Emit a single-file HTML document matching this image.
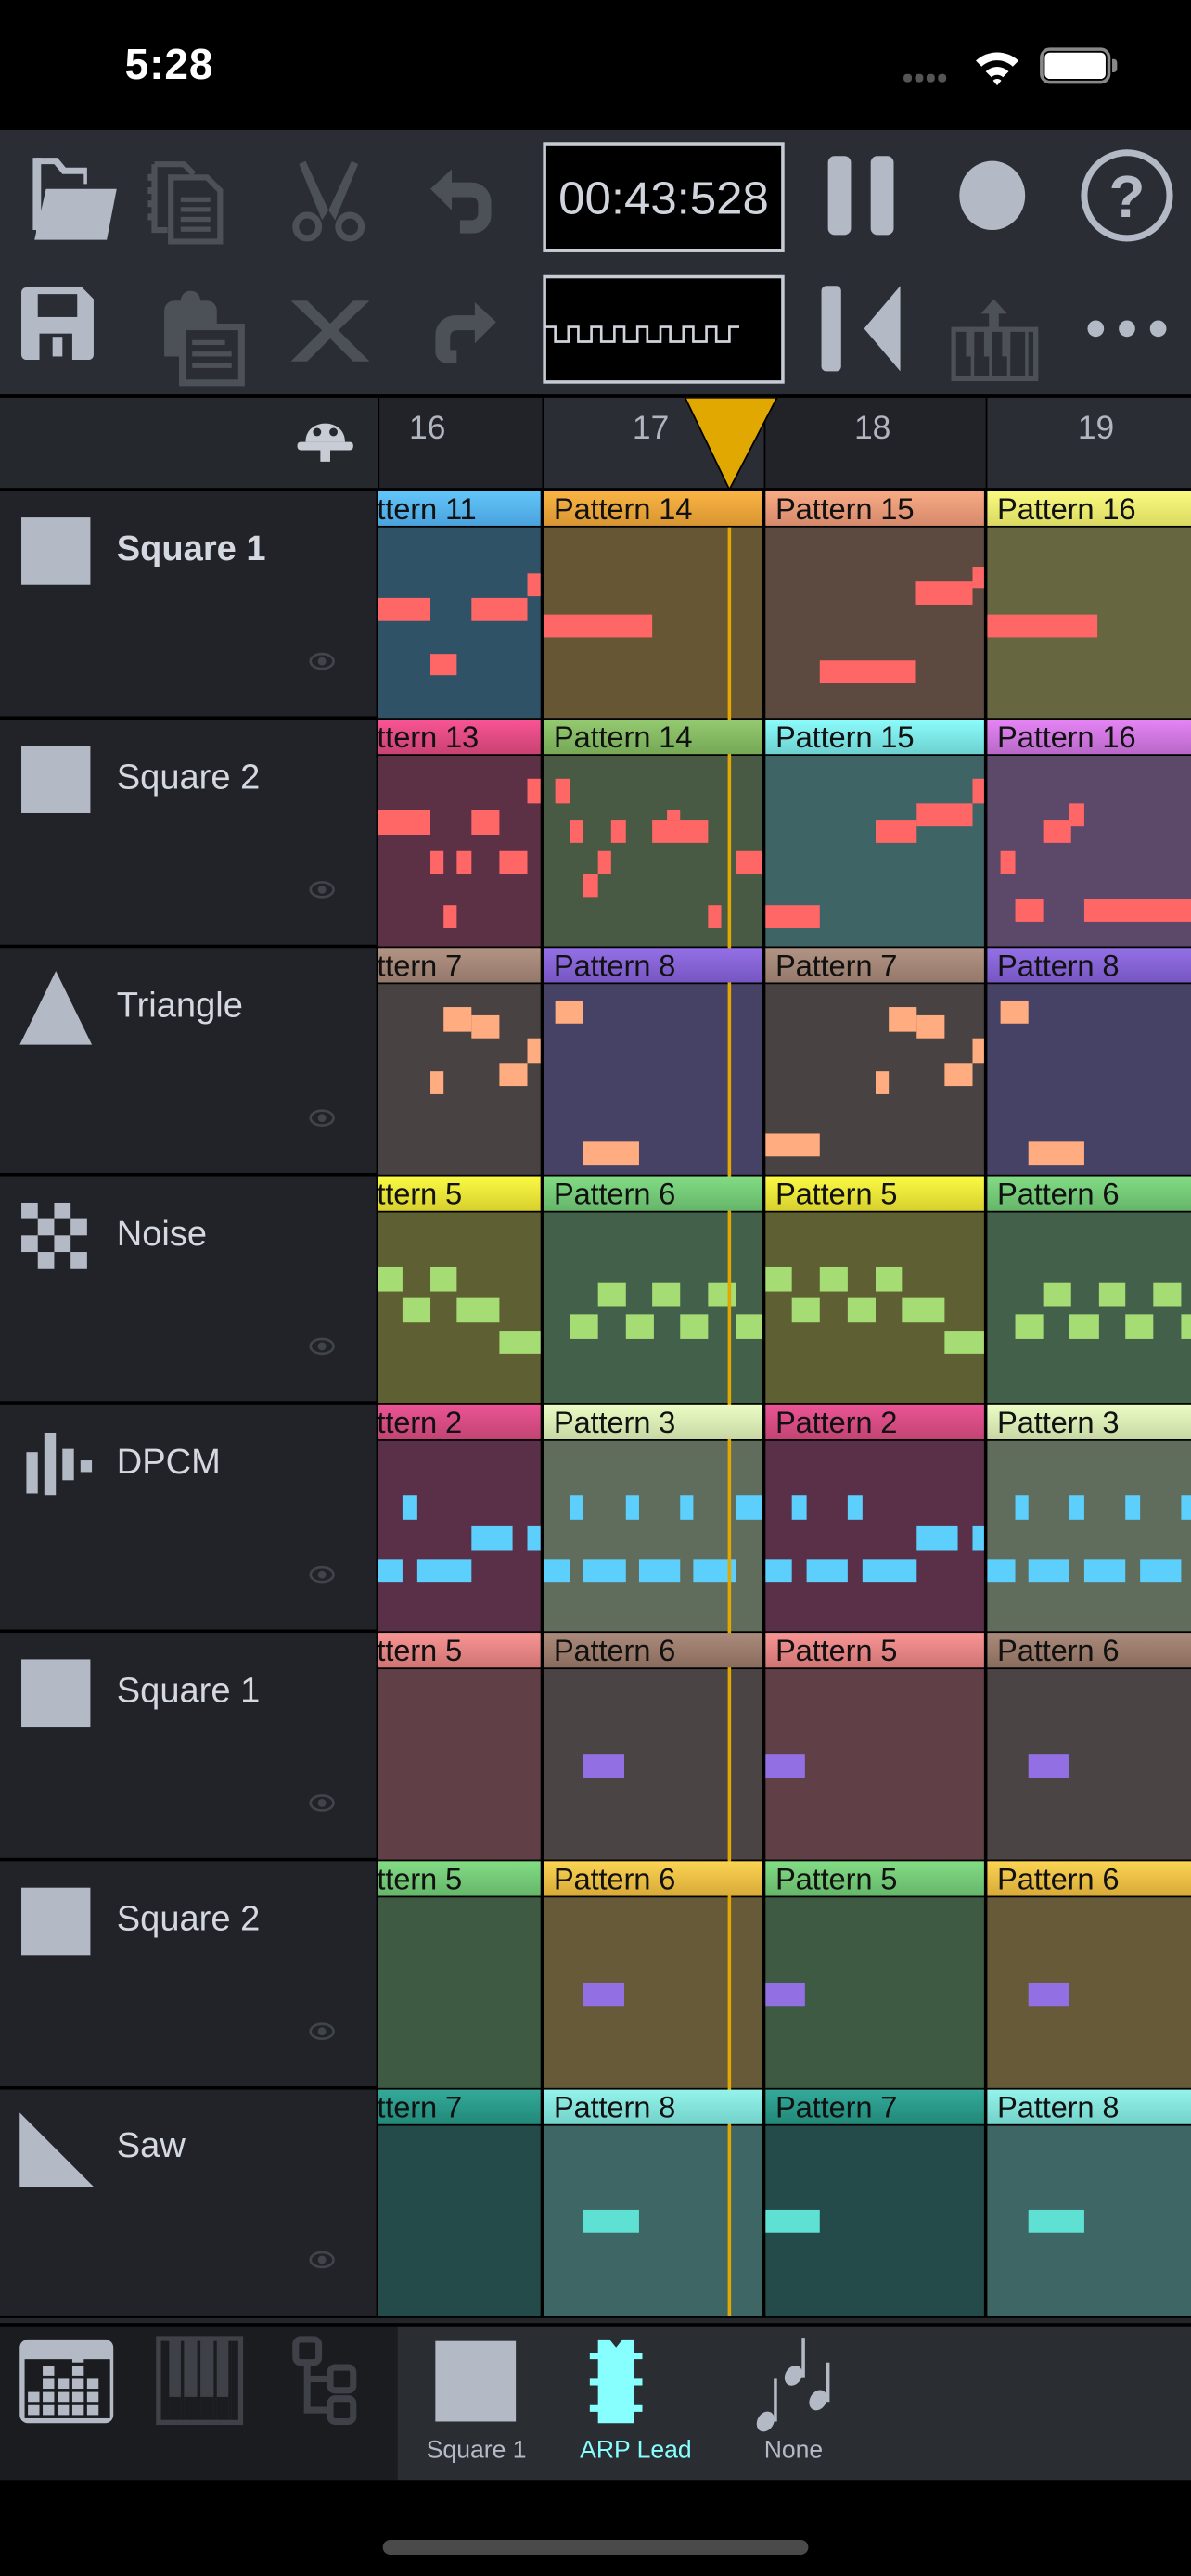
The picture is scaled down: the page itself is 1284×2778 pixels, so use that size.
<!DOCTYPE html>
<html><head><meta charset="utf-8"><style>
*{margin:0;padding:0;box-sizing:border-box}
html,body{width:1284px;height:2778px;overflow:hidden;background:#000}
#w{position:absolute;left:0;top:0;width:725px;height:1568px;transform:scale(1.7711,1.7717);transform-origin:0 0;font-family:"Liberation Sans",sans-serif;background:#000}
.a{position:absolute;display:block}
.h{position:absolute;height:21px;overflow:hidden;white-space:nowrap;font-size:18.5px;line-height:22px;color:#111;letter-spacing:-0.1px}
.b{position:absolute;height:116px}
.tn{position:absolute;left:71px;font-size:21.5px;color:#d4d8e0}
.eye{position:absolute;left:188px;width:16px;height:11px}
.r1 i,.r2 i{background:#ff6666}.r3 i{background:#ffac80}.r4 i{background:#a6dc74}.r5 i{background:#5ccffc}.r6 i,.r7 i{background:#9270e4}.r8 i{background:#5ee0d2}
i{position:absolute;display:block}
.cut{margin-left:-23px}
</style></head><body><div id="w">
<!-- status -->
<div class="a" style="left:76px;top:24px;font-size:26px;font-weight:bold;color:#fff;letter-spacing:0.5px">5:28</div>
<div class="a" style="left:550px;top:45px;width:5px;height:5px;border-radius:2px;background:#555"></div>
<div class="a" style="left:557px;top:45px;width:5px;height:5px;border-radius:2px;background:#555"></div>
<div class="a" style="left:564px;top:45px;width:5px;height:5px;border-radius:2px;background:#555"></div>
<div class="a" style="left:571px;top:45px;width:5px;height:5px;border-radius:2px;background:#555"></div>
<svg class="a" style="left:592px;top:28px" width="30" height="24" viewBox="0 0 30 24"><path d="M2 9 A19 19 0 0 1 28 9 L24.5 12.5 A14 14 0 0 0 5.5 12.5Z M8 15.5 A10 10 0 0 1 22 15.5 L18.5 19 A5 5 0 0 0 11.5 19Z M15 24 L12.5 21 A3.5 3.5 0 0 1 17.5 21Z" fill="#fff"/></svg>
<div class="a" style="left:633px;top:29px;width:43px;height:22px;border:2px solid #888;border-radius:6px"></div>
<div class="a" style="left:636px;top:32px;width:37px;height:16px;border-radius:3px;background:#fff"></div>
<div class="a" style="left:677px;top:36px;width:3px;height:8px;border-radius:0 2px 2px 0;background:#888"></div>
<!-- toolbar -->
<div class="a" style="left:0;top:79px;width:725px;height:161px;background:#2a2d33"></div>
<svg class="a" style="left:0;top:79px" width="725" height="161" viewBox="0 79 725 161">
<g fill="#b4b9c6">
<path d="M20 96h15l5 6h13v10h-2v-6h-13l-5-6h-10v40h-3z"/><path d="M21 146l7-31h43l-6 31z"/>
<path d="M22 96h3v46h-3z"/>
</g>
<g fill="none" stroke="#4c5057" stroke-width="3.5">
<path d="M94 100h18l6 6M94 100v40h8"/>
<path d="M104 108h22l8 8v31h-30z"/>
</g>
<g fill="#4c5057"><rect x="90" y="106" width="4" height="4"/><rect x="90" y="114" width="4" height="4"/><rect x="90" y="122" width="4" height="4"/><rect x="90" y="130" width="4" height="4"/>
<rect x="110" y="120" width="18" height="3"/><rect x="110" y="126" width="18" height="3"/><rect x="110" y="132" width="18" height="3"/><rect x="110" y="138" width="18" height="3"/>
<path d="M186 98l14 30-4 6-14-34z M214 98l-14 30 4 6 14-34z"/>
<path d="M262 115l13-12v8h12a12 12 0 0 1 12 12v8a11 11 0 0 1-11 11h-8v-8h7a4 4 0 0 0 4-4v-6a4 4 0 0 0-4-4h-12v8z"/>
</g>
<circle cx="187" cy="138" r="7" fill="none" stroke="#4c5057" stroke-width="4"/><circle cx="213" cy="138" r="7" fill="none" stroke="#4c5057" stroke-width="4"/>
<rect x="331.5" y="87.5" width="145" height="65" fill="#000" stroke="#c7cbd3" stroke-width="2"/>
<text x="404" y="130" text-anchor="middle" font-size="28" fill="#d0d4dc" font-family="Liberation Sans" textLength="128" lengthAdjust="spacingAndGlyphs">00:43:528</text>
<g fill="#b4b9c6">
<rect x="504" y="95" width="14" height="48" rx="4"/><rect x="530" y="95" width="14" height="48" rx="4"/>
<ellipse cx="604" cy="119" rx="20" ry="21"/>
<circle cx="686" cy="119" r="26" fill="none" stroke="#b4b9c6" stroke-width="4"/>
<text x="686" y="132" text-anchor="middle" font-size="36" font-weight="bold" fill="#b4b9c6" font-family="Liberation Sans">?</text>
<path d="M16 175h34l7 7v34a3 3 0 0 1-3 3h-38a3 3 0 0 1-3-3v-38a3 3 0 0 1 3-3z"/>
</g>
<rect x="23" y="179" width="24" height="14" fill="#2a2d33"/><rect x="24" y="203" width="20" height="16" fill="#2a2d33"/><rect x="32" y="205" width="6" height="12" fill="#b4b9c6"/>
<g fill="#4c5057">
<path d="M100 189a6 6 0 0 1 6-6h4a6 6 0 0 1 12 0h4a6 6 0 0 1 6 6v28h-32z"/>
<rect x="109" y="197" width="40" height="38"/><rect x="113" y="201" width="32" height="30" fill="#2a2d33"/><rect x="117" y="207" width="20" height="3"/><rect x="117" y="214" width="24" height="3"/><rect x="117" y="221" width="24" height="3"/>
<path d="M177 183h10l14 14 14-14h10l-19 18 19 19h-10l-14-14-14 14h-10l19-19z"/>
<path d="M302 196l-13-12v8h-12a12 12 0 0 0-12 12v10a7 7 0 0 0 7 7h6v-8h-4v-8a4 4 0 0 1 4-4h11v8z"/>
</g>
<rect x="331.5" y="168.5" width="145" height="64" fill="#000" stroke="#c7cbd3" stroke-width="2"/>
<path d="M332 199h6v9h8v-9h6v9h8v-9h6v9h8v-9h6v9h8v-9h6v9h8v-9h6v9h8v-9h6v9h8v-9h6v9h8v-9h6" fill="none" stroke="#d0d4dc" stroke-width="1.5"/>
<g fill="#b4b9c6"><rect x="500" y="174" width="12" height="52" rx="3"/><path d="M548 174v52l-22-26z"/>
<circle cx="667" cy="200" r="5"/><circle cx="686" cy="200" r="5"/><circle cx="705" cy="200" r="5"/></g>
<g fill="#4c5057"><path d="M605 182l8 9h-5v10h-6v-10h-5z"/><rect x="579" y="199" width="53" height="33"/></g>
<g fill="#2a2d33"><rect x="582" y="202" width="9" height="27"/><rect x="593" y="202" width="9" height="27"/><rect x="604" y="202" width="9" height="27"/><rect x="615" y="202" width="9" height="27"/><rect x="626" y="202" width="3" height="27"/></g>
<g fill="#4c5057"><rect x="588" y="199" width="5" height="18"/><rect x="599" y="199" width="5" height="18"/><rect x="610" y="199" width="5" height="18"/></g>
</svg>
<!-- header row -->
<div class="a" style="left:0;top:242px;width:230px;height:56px;background:#25282d"></div>
<div class="a" style="left:230px;top:242px;width:100px;height:56px;background:#212328;border-left:1px solid #000"></div>
<div class="a" style="left:330px;top:242px;width:135px;height:56px;background:#2a2d33;border-left:1px solid #000"></div>
<div class="a" style="left:465px;top:242px;width:135px;height:56px;background:#212328;border-left:1px solid #000"></div>
<div class="a" style="left:600px;top:242px;width:125px;height:56px;background:#2a2d33;border-left:1px solid #000"></div>
<div class="a" style="left:249px;top:250px;font-size:20px;color:#b0b5c0">16</div>
<div class="a" style="left:385px;top:250px;font-size:20px;color:#b0b5c0">17</div>
<div class="a" style="left:520px;top:250px;font-size:20px;color:#b0b5c0">18</div>
<div class="a" style="left:656px;top:250px;font-size:20px;color:#b0b5c0">19</div>
<svg class="a" style="left:178px;top:250px" width="40" height="34" viewBox="0 0 40 34"><path d="M8 19 C8 4 32 4 32 19z" fill="#c8ccd4"/><rect x="3" y="19" width="34" height="5" rx="2" fill="#c8ccd4"/><rect x="17" y="22" width="6" height="9" fill="#c8ccd4"/><circle cx="15" cy="13" r="2.5" fill="#25282d"/><circle cx="25" cy="13" r="2.5" fill="#25282d"/></svg>
<div class="a" style="left:0;top:240px;width:725px;height:2px;background:#000"></div>
<div class="a" style="left:0;top:297px;width:725px;height:2px;background:#000"></div>

<!-- tracks left panel -->
<div class="a" style="left:0;top:299px;width:230px;height:1111px;background:#212328"></div>
<div class="a" style="left:229px;top:299px;width:1px;height:1111px;background:#000"></div>
<div class="a" style="left:0;top:436px;width:230px;height:2px;background:#000"></div>
<div class="a" style="left:0;top:575px;width:230px;height:2px;background:#000"></div>
<div class="a" style="left:0;top:714px;width:230px;height:2px;background:#000"></div>
<div class="a" style="left:0;top:853px;width:230px;height:2px;background:#000"></div>
<div class="a" style="left:0;top:992px;width:230px;height:2px;background:#000"></div>
<div class="a" style="left:0;top:1131px;width:230px;height:2px;background:#000"></div>
<div class="a" style="left:0;top:1270px;width:230px;height:2px;background:#000"></div>

<div class="a" style="left:13px;top:315px;width:42px;height:41px;background:#b4b9c6"></div>
<div class="tn" style="top:322px;font-weight:bold">Square 1</div>
<div class="a" style="left:13px;top:454px;width:42px;height:41px;background:#b4b9c6"></div>
<div class="tn" style="top:461px">Square 2</div>
<svg class="a" style="left:11px;top:590px" width="46" height="46"><path d="M23 1L45 46H1z" fill="#b4b9c6"/></svg>
<div class="tn" style="top:600px">Triangle</div>
<svg class="a" style="left:13px;top:732px" width="42" height="42" fill="#b4b9c6"><rect x="0" y="0" width="10" height="10"/><rect x="20" y="0" width="10" height="10"/><rect x="10" y="10" width="10" height="10"/><rect x="30" y="10" width="10" height="10"/><rect x="0" y="20" width="10" height="10"/><rect x="20" y="20" width="10" height="10"/><rect x="10" y="30" width="10" height="10"/><rect x="30" y="30" width="10" height="10"/></svg>
<div class="tn" style="top:739px">Noise</div>
<svg class="a" style="left:16px;top:872px" width="40" height="42" fill="#b4b9c6"><rect x="0" y="12" width="7" height="25"/><rect x="11" y="0" width="7" height="38"/><rect x="22" y="10" width="7" height="19"/><rect x="33" y="17" width="7" height="7"/></svg>
<div class="tn" style="top:878px">DPCM</div>
<div class="a" style="left:13px;top:1010px;width:42px;height:41px;background:#b4b9c6"></div>
<div class="tn" style="top:1017px">Square 1</div>
<div class="a" style="left:13px;top:1149px;width:42px;height:41px;background:#b4b9c6"></div>
<div class="tn" style="top:1156px">Square 2</div>
<svg class="a" style="left:11px;top:1285px" width="46" height="46"><path d="M1 1L46 46H1z" fill="#b4b9c6"/></svg>
<div class="tn" style="top:1294px">Saw</div>
<svg width="0" height="0" style="position:absolute"><defs><g id="e"><ellipse cx="8" cy="5.5" rx="7" ry="4.5" fill="none" stroke="#40444b" stroke-width="1.5"/><circle cx="8" cy="5.5" r="2.5" fill="#40444b"/></g></defs></svg>
<svg class="eye" style="top:397px"><use href="#e"/></svg>
<svg class="eye" style="top:536px"><use href="#e"/></svg>
<svg class="eye" style="top:675px"><use href="#e"/></svg>
<svg class="eye" style="top:814px"><use href="#e"/></svg>
<svg class="eye" style="top:953px"><use href="#e"/></svg>
<svg class="eye" style="top:1092px"><use href="#e"/></svg>
<svg class="eye" style="top:1231px"><use href="#e"/></svg>
<svg class="eye" style="top:1370px"><use href="#e"/></svg>

<!-- grid bg -->
<div class="a" style="left:230px;top:299px;width:495px;height:1111px;background:#000"></div>

<!-- bodies -->
<div class="b" style="left:230px;top:321px;width:99px;background:#2f5266"></div>
<div class="b" style="left:331px;top:321px;width:133px;background:#665634"></div>
<div class="b" style="left:466px;top:321px;width:133px;background:#5c4a40"></div>
<div class="b" style="left:601px;top:321px;width:124px;background:#666640"></div>

<div class="b" style="left:230px;top:460px;width:99px;background:#5c3045"></div>
<div class="b" style="left:331px;top:460px;width:133px;background:#485a44"></div>
<div class="b" style="left:466px;top:460px;width:133px;background:#3f6466"></div>
<div class="b" style="left:601px;top:460px;width:124px;background:#5c4868"></div>

<div class="b" style="left:230px;top:599px;width:99px;background:#484242"></div>
<div class="b" style="left:331px;top:599px;width:133px;background:#464266"></div>
<div class="b" style="left:466px;top:599px;width:133px;background:#484242"></div>
<div class="b" style="left:601px;top:599px;width:124px;background:#464266"></div>

<div class="b" style="left:230px;top:738px;width:99px;background:#5e5f32"></div>
<div class="b" style="left:331px;top:738px;width:133px;background:#42604a"></div>
<div class="b" style="left:466px;top:738px;width:133px;background:#5e5f32"></div>
<div class="b" style="left:601px;top:738px;width:124px;background:#42604a"></div>

<div class="b" style="left:230px;top:877px;width:99px;background:#5a3049"></div>
<div class="b" style="left:331px;top:877px;width:133px;background:#616d5c"></div>
<div class="b" style="left:466px;top:877px;width:133px;background:#5a3049"></div>
<div class="b" style="left:601px;top:877px;width:124px;background:#616d5c"></div>

<div class="b" style="left:230px;top:1016px;width:99px;background:#603f46"></div>
<div class="b" style="left:331px;top:1016px;width:133px;background:#4a4444"></div>
<div class="b" style="left:466px;top:1016px;width:133px;background:#603f46"></div>
<div class="b" style="left:601px;top:1016px;width:124px;background:#4a4444"></div>

<div class="b" style="left:230px;top:1155px;width:99px;background:#3f5a42"></div>
<div class="b" style="left:331px;top:1155px;width:133px;background:#665a38"></div>
<div class="b" style="left:466px;top:1155px;width:133px;background:#3f5a42"></div>
<div class="b" style="left:601px;top:1155px;width:124px;background:#665a38"></div>

<div class="b" style="left:230px;top:1294px;width:99px;background:#244a4a"></div>
<div class="b" style="left:331px;top:1294px;width:133px;background:#3e6665"></div>
<div class="b" style="left:466px;top:1294px;width:133px;background:#244a4a"></div>
<div class="b" style="left:601px;top:1294px;width:124px;background:#3e6665"></div>

<!-- notes -->
<div class="r1">
<i style="left:230px;top:364px;width:32px;height:14px"></i><i style="left:287px;top:364px;width:34px;height:14px"></i><i style="left:321px;top:349px;width:8px;height:14px"></i><i style="left:262px;top:398px;width:16px;height:13px"></i>
<i style="left:331px;top:374px;width:66px;height:14px"></i>
<i style="left:557px;top:354px;width:35px;height:14px"></i><i style="left:592px;top:345px;width:7px;height:13px"></i><i style="left:499px;top:402px;width:58px;height:14px"></i>
<i style="left:601px;top:374px;width:67px;height:14px"></i>
</div>
<div class="r2">
<i style="left:321px;top:474px;width:8px;height:15px"></i><i style="left:230px;top:493px;width:32px;height:15px"></i><i style="left:287px;top:493px;width:17px;height:15px"></i><i style="left:262px;top:518px;width:8px;height:14px"></i><i style="left:278px;top:518px;width:9px;height:14px"></i><i style="left:304px;top:518px;width:17px;height:14px"></i><i style="left:270px;top:551px;width:8px;height:14px"></i>
<i style="left:338px;top:474px;width:9px;height:15px"></i><i style="left:347px;top:499px;width:8px;height:14px"></i><i style="left:372px;top:499px;width:9px;height:14px"></i><i style="left:397px;top:499px;width:34px;height:14px"></i><i style="left:406px;top:493px;width:8px;height:6px"></i><i style="left:364px;top:518px;width:8px;height:14px"></i><i style="left:355px;top:532px;width:9px;height:14px"></i><i style="left:431px;top:551px;width:8px;height:14px"></i><i style="left:448px;top:518px;width:16px;height:14px"></i>
<i style="left:592px;top:474px;width:7px;height:15px"></i><i style="left:558px;top:489px;width:34px;height:14px"></i><i style="left:533px;top:499px;width:25px;height:14px"></i><i style="left:466px;top:551px;width:33px;height:14px"></i>
<i style="left:651px;top:489px;width:9px;height:14px"></i><i style="left:635px;top:499px;width:17px;height:14px"></i><i style="left:609px;top:518px;width:9px;height:14px"></i><i style="left:618px;top:547px;width:17px;height:14px"></i><i style="left:660px;top:547px;width:65px;height:14px"></i>
</div>
<div class="r3">
<i style="left:270px;top:613px;width:17px;height:15px"></i><i style="left:287px;top:618px;width:17px;height:14px"></i><i style="left:321px;top:632px;width:8px;height:15px"></i><i style="left:304px;top:647px;width:17px;height:14px"></i><i style="left:262px;top:652px;width:8px;height:14px"></i>
<i style="left:338px;top:609px;width:17px;height:14px"></i><i style="left:355px;top:695px;width:34px;height:14px"></i>
<i style="left:541px;top:613px;width:17px;height:15px"></i><i style="left:558px;top:618px;width:17px;height:14px"></i><i style="left:592px;top:632px;width:7px;height:15px"></i><i style="left:575px;top:647px;width:17px;height:14px"></i><i style="left:533px;top:652px;width:8px;height:14px"></i><i style="left:466px;top:690px;width:33px;height:14px"></i>
<i style="left:609px;top:609px;width:17px;height:14px"></i><i style="left:626px;top:695px;width:34px;height:14px"></i>
</div>
<div class="r4">
<i style="left:230px;top:771px;width:15px;height:15px"></i><i style="left:262px;top:771px;width:16px;height:15px"></i><i style="left:245px;top:790px;width:17px;height:15px"></i><i style="left:278px;top:790px;width:26px;height:15px"></i><i style="left:304px;top:810px;width:25px;height:14px"></i>
<i style="left:364px;top:781px;width:17px;height:14px"></i><i style="left:397px;top:781px;width:17px;height:14px"></i><i style="left:431px;top:781px;width:17px;height:14px"></i><i style="left:347px;top:800px;width:17px;height:15px"></i><i style="left:381px;top:800px;width:17px;height:15px"></i><i style="left:414px;top:800px;width:17px;height:15px"></i><i style="left:448px;top:800px;width:16px;height:15px"></i>
<i style="left:466px;top:771px;width:16px;height:15px"></i><i style="left:499px;top:771px;width:17px;height:15px"></i><i style="left:533px;top:771px;width:16px;height:15px"></i><i style="left:482px;top:790px;width:17px;height:15px"></i><i style="left:516px;top:790px;width:17px;height:15px"></i><i style="left:549px;top:790px;width:26px;height:15px"></i><i style="left:575px;top:810px;width:24px;height:14px"></i>
<i style="left:635px;top:781px;width:17px;height:14px"></i><i style="left:669px;top:781px;width:16px;height:14px"></i><i style="left:702px;top:781px;width:17px;height:14px"></i><i style="left:618px;top:800px;width:17px;height:15px"></i><i style="left:651px;top:800px;width:18px;height:15px"></i><i style="left:685px;top:800px;width:17px;height:15px"></i><i style="left:719px;top:800px;width:6px;height:15px"></i>
</div>
<div class="r5">
<i style="left:245px;top:910px;width:9px;height:15px"></i><i style="left:287px;top:929px;width:25px;height:15px"></i><i style="left:321px;top:929px;width:8px;height:15px"></i><i style="left:230px;top:949px;width:15px;height:14px"></i><i style="left:254px;top:949px;width:33px;height:14px"></i>
<i style="left:347px;top:910px;width:8px;height:15px"></i><i style="left:381px;top:910px;width:8px;height:15px"></i><i style="left:414px;top:910px;width:8px;height:15px"></i><i style="left:448px;top:910px;width:16px;height:15px"></i><i style="left:331px;top:949px;width:16px;height:14px"></i><i style="left:355px;top:949px;width:26px;height:14px"></i><i style="left:389px;top:949px;width:25px;height:14px"></i><i style="left:422px;top:949px;width:26px;height:14px"></i>
<i style="left:482px;top:910px;width:9px;height:15px"></i><i style="left:516px;top:910px;width:9px;height:15px"></i><i style="left:558px;top:929px;width:25px;height:15px"></i><i style="left:592px;top:929px;width:7px;height:15px"></i><i style="left:466px;top:949px;width:16px;height:14px"></i><i style="left:491px;top:949px;width:25px;height:14px"></i><i style="left:525px;top:949px;width:33px;height:14px"></i>
<i style="left:618px;top:910px;width:8px;height:15px"></i><i style="left:651px;top:910px;width:9px;height:15px"></i><i style="left:685px;top:910px;width:9px;height:15px"></i><i style="left:719px;top:910px;width:6px;height:15px"></i><i style="left:601px;top:949px;width:17px;height:14px"></i><i style="left:626px;top:949px;width:25px;height:14px"></i><i style="left:660px;top:949px;width:25px;height:14px"></i><i style="left:694px;top:949px;width:25px;height:14px"></i>
</div>
<div class="r6"><i style="left:355px;top:1068px;width:25px;height:14px"></i><i style="left:466px;top:1068px;width:24px;height:14px"></i><i style="left:626px;top:1068px;width:25px;height:14px"></i></div>
<div class="r7"><i style="left:355px;top:1207px;width:25px;height:14px"></i><i style="left:466px;top:1207px;width:24px;height:14px"></i><i style="left:626px;top:1207px;width:25px;height:14px"></i></div>
<div class="r8"><i style="left:355px;top:1345px;width:34px;height:14px"></i><i style="left:466px;top:1345px;width:33px;height:14px"></i><i style="left:626px;top:1345px;width:34px;height:14px"></i></div>

<!-- playhead line -->
<div class="a" style="left:443px;top:321px;width:2px;height:1089px;background:#e0a800"></div>

<!-- headers -->
<div class="h" style="left:230px;top:299px;width:99px;background:linear-gradient(#62c6fa,#4aa2dc)"><span class="cut">Pattern 11</span></div>
<div class="h" style="left:331px;top:299px;width:133px;background:linear-gradient(#fab444,#d89632);padding-left:6px">Pattern 14</div>
<div class="h" style="left:466px;top:299px;width:133px;background:linear-gradient(#f8aa84,#d68a6c);padding-left:6px">Pattern 15</div>
<div class="h" style="left:601px;top:299px;width:124px;background:linear-gradient(#fafa80,#dada62);padding-left:6px">Pattern 16</div>

<div class="h" style="left:230px;top:438px;width:99px;background:linear-gradient(#fa5494,#c84272)"><span class="cut">Pattern 13</span></div>
<div class="h" style="left:331px;top:438px;width:133px;background:linear-gradient(#94ca70,#76a856);padding-left:6px">Pattern 14</div>
<div class="h" style="left:466px;top:438px;width:133px;background:linear-gradient(#8cfcfc,#6ed0d0);padding-left:6px">Pattern 15</div>
<div class="h" style="left:601px;top:438px;width:124px;background:linear-gradient(#e684f6,#b868c8);padding-left:6px">Pattern 16</div>

<div class="h" style="left:230px;top:577px;width:99px;background:linear-gradient(#b29484,#94786a)"><span class="cut">Pattern 7</span></div>
<div class="h" style="left:331px;top:577px;width:133px;background:linear-gradient(#9470e6,#7656c2);padding-left:6px">Pattern 8</div>
<div class="h" style="left:466px;top:577px;width:133px;background:linear-gradient(#b29484,#94786a);padding-left:6px">Pattern 7</div>
<div class="h" style="left:601px;top:577px;width:124px;background:linear-gradient(#9470e6,#7656c2);padding-left:6px">Pattern 8</div>

<div class="h" style="left:230px;top:716px;width:99px;background:linear-gradient(#fafa44,#d8d02e)"><span class="cut">Pattern 5</span></div>
<div class="h" style="left:331px;top:716px;width:133px;background:linear-gradient(#82dc84,#66b66a);padding-left:6px">Pattern 6</div>
<div class="h" style="left:466px;top:716px;width:133px;background:linear-gradient(#fafa44,#d8d02e);padding-left:6px">Pattern 5</div>
<div class="h" style="left:601px;top:716px;width:124px;background:linear-gradient(#82dc84,#66b66a);padding-left:6px">Pattern 6</div>

<div class="h" style="left:230px;top:855px;width:99px;background:linear-gradient(#ea5494,#c24474)"><span class="cut">Pattern 2</span></div>
<div class="h" style="left:331px;top:855px;width:133px;background:linear-gradient(#ecfcc4,#c8d8a4);padding-left:6px">Pattern 3</div>
<div class="h" style="left:466px;top:855px;width:133px;background:linear-gradient(#ea5494,#c24474);padding-left:6px">Pattern 2</div>
<div class="h" style="left:601px;top:855px;width:124px;background:linear-gradient(#ecfcc4,#c8d8a4);padding-left:6px">Pattern 3</div>

<div class="h" style="left:230px;top:994px;width:99px;background:linear-gradient(#f89494,#d07474)"><span class="cut">Pattern 5</span></div>
<div class="h" style="left:331px;top:994px;width:133px;background:linear-gradient(#aa8a7a,#8a6c5e);padding-left:6px">Pattern 6</div>
<div class="h" style="left:466px;top:994px;width:133px;background:linear-gradient(#f89494,#d07474);padding-left:6px">Pattern 5</div>
<div class="h" style="left:601px;top:994px;width:124px;background:linear-gradient(#aa8a7a,#8a6c5e);padding-left:6px">Pattern 6</div>

<div class="h" style="left:230px;top:1133px;width:99px;background:linear-gradient(#82dc84,#66b66a)"><span class="cut">Pattern 5</span></div>
<div class="h" style="left:331px;top:1133px;width:133px;background:linear-gradient(#fad452,#d8aa38);padding-left:6px">Pattern 6</div>
<div class="h" style="left:466px;top:1133px;width:133px;background:linear-gradient(#82dc84,#66b66a);padding-left:6px">Pattern 5</div>
<div class="h" style="left:601px;top:1133px;width:124px;background:linear-gradient(#fad452,#d8aa38);padding-left:6px">Pattern 6</div>

<div class="h" style="left:230px;top:1272px;width:99px;background:linear-gradient(#34aa9a,#228878)"><span class="cut">Pattern 7</span></div>
<div class="h" style="left:331px;top:1272px;width:133px;background:linear-gradient(#94f4ec,#72d2ca);padding-left:6px">Pattern 8</div>
<div class="h" style="left:466px;top:1272px;width:133px;background:linear-gradient(#34aa9a,#228878);padding-left:6px">Pattern 7</div>
<div class="h" style="left:601px;top:1272px;width:124px;background:linear-gradient(#94f4ec,#72d2ca);padding-left:6px">Pattern 8</div>

<!-- playhead triangle -->
<svg class="a" style="left:415px;top:242px" width="60" height="58"><path d="M2 0H58L29 56z" fill="#e0a800" stroke="#000" stroke-width="1"/></svg>

<!-- bottom -->
<div class="a" style="left:0;top:1410px;width:725px;height:6px;background:#000"></div>
<div class="a" style="left:0;top:1411px;width:725px;height:3px;background:#23262b"></div>
<div class="a" style="left:0;top:1416px;width:242px;height:94px;background:#1a1c20"></div>
<div class="a" style="left:242px;top:1416px;width:483px;height:94px;background:#2a2d32"></div>
<svg class="a" style="left:0;top:1416px" width="725" height="94" viewBox="0 1416 725 94">
<rect x="12" y="1424" width="57" height="51" rx="5" fill="#b4b9c6"/><rect x="15" y="1436" width="52" height="36" fill="#1a1c20"/>
<g fill="#b4b9c6"><rect x="17" y="1464" width="7" height="6"/><rect x="26" y="1464" width="7" height="6"/><rect x="35" y="1464" width="7" height="6"/><rect x="44" y="1464" width="7" height="6"/><rect x="53" y="1464" width="7" height="6"/>
<rect x="17" y="1456" width="7" height="6"/><rect x="26" y="1456" width="7" height="6"/><rect x="35" y="1456" width="7" height="6"/><rect x="44" y="1456" width="7" height="6"/><rect x="53" y="1456" width="7" height="6"/>
<rect x="26" y="1448" width="7" height="6"/><rect x="35" y="1448" width="7" height="6"/><rect x="44" y="1448" width="7" height="6"/><rect x="53" y="1448" width="7" height="6"/>
<rect x="26" y="1440" width="7" height="6"/><rect x="44" y="1440" width="7" height="6"/><rect x="44" y="1432" width="7" height="6"/></g>
<rect x="95" y="1422" width="53" height="54" fill="#3e4147"/>
<g fill="#1a1c20"><rect x="98" y="1425" width="3" height="48"/><rect x="103" y="1459" width="7" height="14"/><rect x="112" y="1459" width="8" height="14"/><rect x="122" y="1459" width="8" height="14"/><rect x="132" y="1459" width="7" height="14"/><rect x="141" y="1425" width="4" height="48"/>
<rect x="101" y="1425" width="2" height="48"/><rect x="110" y="1425" width="2" height="48"/><rect x="120" y="1425" width="2" height="48"/><rect x="130" y="1425" width="2" height="48"/><rect x="139" y="1425" width="2" height="48"/></g>
<g fill="#3e4147"><rect x="103" y="1425" width="7" height="33"/><rect x="113" y="1425" width="7" height="33"/><rect x="123" y="1425" width="7" height="33"/><rect x="133" y="1425" width="6" height="33"/></g>
<g fill="none" stroke="#3e4147" stroke-width="4"><rect x="180" y="1424" width="14" height="14" rx="3"/><rect x="201" y="1441" width="14" height="14" rx="3"/><rect x="201" y="1460" width="14" height="14" rx="3"/><path d="M187 1438v29h14M187 1448h14"/></g>
<rect x="265" y="1425" width="49" height="49" fill="#b4b9c6"/>
<path d="M364 1424h7l4 5 4-5h7v8h5v4h-5v12h5v4h-5v12h5v4h-5v7h-22v-7h-5v-4h5v-12h-5v-4h5v-12h-5v-4h5z" fill="#88ffff"/>
<g fill="#b4b9c6">
<rect x="488" y="1423" width="2" height="24"/><ellipse cx="483" cy="1446" rx="6.5" ry="5" transform="rotate(-60 483 1446)"/>
<rect x="503" y="1438" width="2" height="24"/><ellipse cx="498" cy="1461" rx="6.5" ry="5" transform="rotate(-60 498 1461)"/>
<rect x="471" y="1448" width="2" height="26"/><ellipse cx="466" cy="1474" rx="6.5" ry="5" transform="rotate(-60 466 1474)"/>
</g>
<text x="290" y="1496" text-anchor="middle" font-size="15" fill="#b4b9c6" font-family="Liberation Sans">Square 1</text>
<text x="387" y="1496" text-anchor="middle" font-size="15" fill="#88ffff" font-family="Liberation Sans">ARP Lead</text>
<text x="483" y="1496" text-anchor="middle" font-size="15" fill="#b4b9c6" font-family="Liberation Sans">None</text>
</svg>
<div class="a" style="left:233px;top:1546px;width:259px;height:9px;border-radius:5px;background:#4a4a4a"></div>
</div></body></html>
